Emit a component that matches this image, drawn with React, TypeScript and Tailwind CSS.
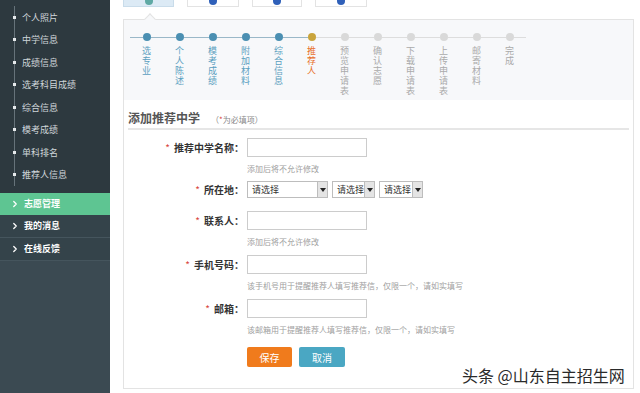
import { ChevronRight } from "lucide-react";

const subItems = ["个人照片", "中学信息", "成绩信息", "选考科目成绩", "综合信息", "模考成绩", "单科排名", "推荐人信息"];

type StepState = "done" | "current" | "todo";
const steps: { t: string; s: StepState }[] = [
  { t: "选专业", s: "done" },
  { t: "个人陈述", s: "done" },
  { t: "模考成绩", s: "done" },
  { t: "附加材料", s: "done" },
  { t: "综合信息", s: "done" },
  { t: "推荐人", s: "current" },
  { t: "预览申请表", s: "todo" },
  { t: "确认志愿", s: "todo" },
  { t: "下载申请表", s: "todo" },
  { t: "上传申请表", s: "todo" },
  { t: "邮寄材料", s: "todo" },
  { t: "完成", s: "todo" },
];

const dotCls: Record<StepState, string> = {
  done: "bg-[#4b8fb2]",
  current: "bg-[#c9a43c]",
  todo: "bg-[#d9d9d9]",
};
const textCls: Record<StepState, string> = {
  done: "text-[#5b9fbf]",
  current: "text-[#e8702a]",
  todo: "text-[#aaaaaa]",
};

function Sidebar() {
  return (
    <aside className="w-[110px] h-full shrink-0 bg-[#3b4a52] flex flex-col">
      <div className="bg-[#2d393f] pt-[6px] pb-[7px]">
        <div className="ml-[14px] border-l border-[#66737a]">
          {subItems.map((s) => (
            <div key={s} className="h-[22.5px] flex items-center">
              <span className="w-[3px] h-[3px] bg-[#e6eaec] ml-[-2px]" />
              <span className="ml-[6px] text-[9px] text-[#cfd6da]">{s}</span>
            </div>
          ))}
        </div>
      </div>
      <div className="h-[22px] bg-[#5ec592] flex items-center pl-[10px] text-white">
        <ChevronRight size={10} strokeWidth={3} />
        <span className="ml-[4px] text-[9px] font-bold">志愿管理</span>
      </div>
      {["我的消息", "在线反馈"].map((s) => (
        <div key={s} className="h-[23px] bg-[#34434a] border-b border-[#45555d] flex items-center pl-[10px] text-white">
          <ChevronRight size={10} strokeWidth={3} />
          <span className="ml-[4px] text-[9px] font-bold">{s}</span>
        </div>
      ))}
    </aside>
  );
}

function Tabs() {
  const tabs = [
    { w: "w-[51px]", active: true },
    { w: "w-[52px]", active: false },
    { w: "w-[50px]", active: false },
    { w: "w-[52px]", active: false },
  ];
  return (
    <div className="flex gap-[13px] h-[7px] items-end">
      {tabs.map((t, i) => (
        <div
          key={i}
          className={`${t.w} h-[20px] shrink-0 flex justify-center items-end border ${
            t.active ? "bg-[#dceaf5] border-[#c9dcea]" : "bg-white border-[#e3e3e3]"
          }`}
        >
          <span className={`w-[8px] h-[8px] rounded-full mb-[1px] ${t.active ? "bg-[#5fa9a4]" : "bg-[#2f60b9]"}`} />
        </div>
      ))}
    </div>
  );
}

function Steps() {
  return (
    <div className="bg-[#f7f8fa] h-[80px] pt-[13px] pl-[6px] flex">
      {steps.map((st, i) => {
        const leftDone = st.s !== "todo";
        const rightDone = i + 1 < steps.length && steps[i + 1].s !== "todo";
        return (
          <div key={st.t} className="w-[33px] flex flex-col items-center">
            <div className="w-full h-[8px] flex items-center">
              <span className={`flex-1 h-px ${leftDone ? "bg-[#9ab8c8]" : "bg-[#dddddd]"}`} />
              <span className={`w-[8px] h-[8px] rounded-full ${dotCls[st.s]}`} />
              <span className={`flex-1 h-px ${rightDone ? "bg-[#9ab8c8]" : "bg-[#dddddd]"}`} />
            </div>
            <div
              className={`mt-[5px] [writing-mode:vertical-rl] [text-orientation:upright] tracking-[1px] text-[9px] leading-[9px] ${textCls[st.s]}`}
            >
              {st.t}
            </div>
          </div>
        );
      })}
    </div>
  );
}

function Label({ text }: { text: string }) {
  return (
    <div className="w-[120px] shrink-0 mr-[3px] text-right text-[10px] font-bold text-[#333] whitespace-nowrap">
      <span className="text-[#d9463e] font-normal mr-[4px]">*</span>
      {text}：
    </div>
  );
}

function Hint({ text }: { text: string }) {
  return <div className="ml-[123px] mt-[6px] h-[12px] leading-[12px] text-[8px] text-[#a0a0a0] whitespace-nowrap">{text}</div>;
}

function Select({ w }: { w: string }) {
  return (
    <div className={`${w} h-[17px] border border-[#bdbdbd] flex items-center bg-white`}>
      <span className="flex-1 pl-[4px] text-[9px] text-[#333] leading-none whitespace-nowrap">请选择</span>
      <span className="w-[10px] h-full border-l border-[#bdbdbd] bg-[#e4e4e4] flex items-center justify-center">
        <svg width="6" height="4" viewBox="0 0 6 4">
          <polygon points="0,0 6,0 3,4" fill="#222" />
        </svg>
      </span>
    </div>
  );
}

function Input() {
  return <div className="w-[120px] h-[19px] border border-[#cccccc] bg-white" />;
}

export default function App() {
  return (
    <div className="w-[640px] h-[393px] overflow-hidden flex bg-white font-['Noto_Sans_CJK_SC',sans-serif] relative">
      <Sidebar />
      <main className="flex-1 pl-[13px]">
        <Tabs />
        <div className="mt-[12px] w-[511px] h-[370px] border border-[#e3e3e3] relative">
          <span className="absolute top-[-5px] left-[22px] w-[8px] h-[8px] rotate-45 bg-[#f7f8fa] border-l border-t border-[#e3e3e3]" />
          <Steps />
          <div className="mx-[4px] pt-[10px] h-[30px] border-b-2 border-[#e6e6e6] flex items-baseline">
            <span className="text-[12px] leading-[16px] font-bold text-[#555]">添加推荐中学</span>
            <span className="ml-[11px] text-[8px] text-[#888]">
              （<span className="text-[#d9463e]">*</span>为必填项）
            </span>
          </div>

          <div className="mt-[8px] flex items-center">
            <Label text="推荐中学名称" />
            <Input />
          </div>
          <Hint text="添加后将不允许修改" />

          <div className="mt-[6px] flex items-center">
            <Label text="所在地" />
            <div className="flex">
              <Select w="w-[81px]" />
              <span className="w-[4px]" />
              <Select w="w-[43px]" />
              <span className="w-[4px]" />
              <Select w="w-[44px]" />
            </div>
          </div>

          <div className="mt-[13px] flex items-center">
            <Label text="联系人" />
            <Input />
          </div>
          <Hint text="添加后将不允许修改" />

          <div className="mt-[7px] flex items-center">
            <Label text="手机号码" />
            <Input />
          </div>
          <Hint text="该手机号用于提醒推荐人填写推荐信，仅限一个，请如实填写" />

          <div className="mt-[7px] flex items-center">
            <Label text="邮箱" />
            <Input />
          </div>
          <Hint text="该邮箱用于提醒推荐人填写推荐信，仅限一个，请如实填写" />

          <div className="mt-[11px] ml-[123px] flex gap-[7px]">
            <button className="w-[45px] h-[20px] rounded-[2px] bg-[#f07b1c] text-white text-[10px]">保存</button>
            <button className="w-[46px] h-[20px] rounded-[2px] bg-[#4aa7c3] text-white text-[10px]">取消</button>
          </div>
        </div>
      </main>
      <div className="absolute left-[462px] top-[363px] text-[16px] leading-[24px] text-[#2a2a2a] [text-shadow:0_0_2px_#fff,0_0_2px_#fff,0_0_3px_#fff]">
        头条 @山东自主招生网
      </div>
    </div>
  );
}
